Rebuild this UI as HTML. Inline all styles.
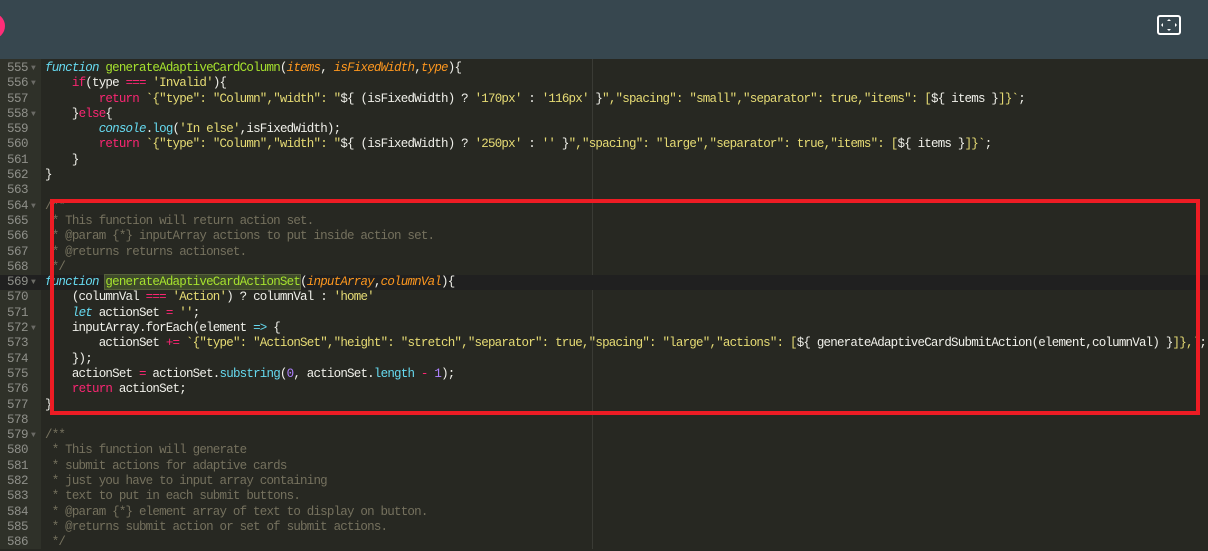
<!DOCTYPE html>
<html><head><meta charset="utf-8"><style>
*{margin:0;padding:0;box-sizing:border-box}
html,body{width:1208px;height:549px;overflow:hidden;background:#272822}
#hdr{position:absolute;left:0;top:0;width:1208px;height:59px;background:#37474f}
#dot{position:absolute;left:-21px;top:13px;width:26px;height:26px;border-radius:50%;background:#ff2d78}
#gut{position:absolute;left:0;top:59px;width:41px;height:490px;background:#2f3129}
#ed{position:absolute;left:0;top:61px;width:1208px;font:12.5px/15.3px "Liberation Mono",monospace;letter-spacing:-0.79px;color:#f0f0ea}
.l{position:relative;height:15.3px;white-space:pre}
.n{position:absolute;left:0;width:28px;text-align:right;color:#8f908a;letter-spacing:-0.5px}
.f{position:absolute;left:31px;color:#6b6b66;font-size:8px}
.c{position:absolute;left:45px}
.act{background:#202020}
.k{color:#f92672}.s{color:#e6db74}.i{color:#66d9ef;font-style:italic}.g{color:#a6e22e}.p{color:#fd971f;font-style:italic}.m{color:#75715e}.b{color:#66d9ef}.v{color:#ae81ff}
.hl{background:#3e4a2a;outline:1px solid #55603a}
#pm{position:absolute;left:592px;top:59px;width:1px;height:490px;background:#3a3b35}
#box{position:absolute;left:50px;top:199px;width:1150px;height:216px;border:4px solid #ed1c24}
</style></head><body>
<div id="hdr"><div id="dot"></div>
<svg style="position:absolute;left:1156px;top:14px" width="26" height="23" viewBox="0 0 26 23"><rect x="2" y="2" width="22" height="18" rx="2" fill="none" stroke="#fff" stroke-width="2"/><path d="M11 7h4l-2-2zM11 15h4l-2 2zM7 9v4l-2-2zM19 9v4l2-2z" fill="#fff"/></svg>
</div>
<div id="gut"></div>
<div id="pm"></div>
<div id="ed">
<div class="l"><span class="n">555</span><span class="f">▼</span><span class="c"><span class="i">function</span> <span class="g">generateAdaptiveCardColumn</span>(<span class="p">items</span>, <span class="p">isFixedWidth</span>,<span class="p">type</span>){</span></div>
<div class="l"><span class="n">556</span><span class="f">▼</span><span class="c">    <span class="k">if</span>(type <span class="k">===</span> <span class="s">'Invalid'</span>){</span></div>
<div class="l"><span class="n">557</span><span class="c">        <span class="k">return</span> <span class="s">`{"type": "Column","width": "</span>${ (isFixedWidth) ? <span class="s">'170px'</span> : <span class="s">'116px'</span> }<span class="s">","spacing": "small","separator": true,"items": [</span>${ items }<span class="s">]}`</span>;</span></div>
<div class="l"><span class="n">558</span><span class="f">▼</span><span class="c">    }<span class="k">else</span>{</span></div>
<div class="l"><span class="n">559</span><span class="c">        <span class="i">console</span>.<span class="b">log</span>(<span class="s">'In else'</span>,isFixedWidth);</span></div>
<div class="l"><span class="n">560</span><span class="c">        <span class="k">return</span> <span class="s">`{"type": "Column","width": "</span>${ (isFixedWidth) ? <span class="s">'250px'</span> : <span class="s">''</span> }<span class="s">","spacing": "large","separator": true,"items": [</span>${ items }<span class="s">]}`</span>;</span></div>
<div class="l"><span class="n">561</span><span class="c">    }</span></div>
<div class="l"><span class="n">562</span><span class="c">}</span></div>
<div class="l"><span class="n">563</span><span class="c"></span></div>
<div class="l"><span class="n">564</span><span class="f">▼</span><span class="c m">/**</span></div>
<div class="l"><span class="n">565</span><span class="c m"> * This function will return action set.</span></div>
<div class="l"><span class="n">566</span><span class="c m"> * @param {*} inputArray actions to put inside action set.</span></div>
<div class="l"><span class="n">567</span><span class="c m"> * @returns returns actionset.</span></div>
<div class="l"><span class="n">568</span><span class="c m"> */</span></div>
<div class="l act"><span class="n">569</span><span class="f">▼</span><span class="c"><span class="i">function</span> <span class="g hl">generateAdaptiveCardActionSet</span>(<span class="p">inputArray</span>,<span class="p">columnVal</span>){</span></div>
<div class="l"><span class="n">570</span><span class="c">    (columnVal <span class="k">===</span> <span class="s">'Action'</span>) ? columnVal : <span class="s">'home'</span></span></div>
<div class="l"><span class="n">571</span><span class="c">    <span class="i">let</span> actionSet <span class="k">=</span> <span class="s">''</span>;</span></div>
<div class="l"><span class="n">572</span><span class="f">▼</span><span class="c">    inputArray.forEach(element <span class="b">=&gt;</span> {</span></div>
<div class="l"><span class="n">573</span><span class="c">        actionSet <span class="k">+=</span> <span class="s">`{"type": "ActionSet","height": "stretch","separator": true,"spacing": "large","actions": [</span>${ generateAdaptiveCardSubmitAction(element,columnVal) }<span class="s">]},`</span>;</span></div>
<div class="l"><span class="n">574</span><span class="c">    });</span></div>
<div class="l"><span class="n">575</span><span class="c">    actionSet <span class="k">=</span> actionSet.<span class="b">substring</span>(<span class="v">0</span>, actionSet.<span class="b">length</span> <span class="k">-</span> <span class="v">1</span>);</span></div>
<div class="l"><span class="n">576</span><span class="c">    <span class="k">return</span> actionSet;</span></div>
<div class="l"><span class="n">577</span><span class="c">}</span></div>
<div class="l"><span class="n">578</span><span class="c"></span></div>
<div class="l"><span class="n">579</span><span class="f">▼</span><span class="c m">/**</span></div>
<div class="l"><span class="n">580</span><span class="c m"> * This function will generate</span></div>
<div class="l"><span class="n">581</span><span class="c m"> * submit actions for adaptive cards</span></div>
<div class="l"><span class="n">582</span><span class="c m"> * just you have to input array containing</span></div>
<div class="l"><span class="n">583</span><span class="c m"> * text to put in each submit buttons.</span></div>
<div class="l"><span class="n">584</span><span class="c m"> * @param {*} element array of text to display on button.</span></div>
<div class="l"><span class="n">585</span><span class="c m"> * @returns submit action or set of submit actions.</span></div>
<div class="l"><span class="n">586</span><span class="c m"> */</span></div>
</div>
<div id="box"></div>
</body></html>
